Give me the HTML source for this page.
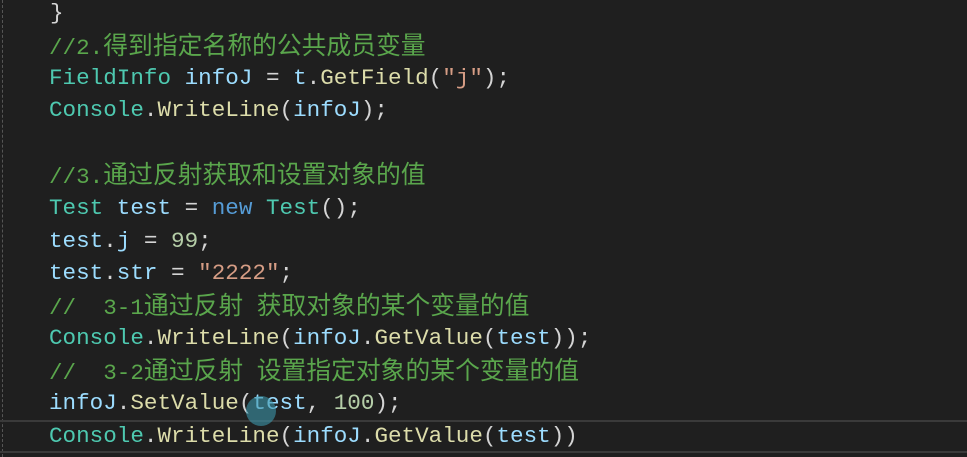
<!DOCTYPE html>
<html><head><meta charset="utf-8"><style>
html,body{margin:0;padding:0;width:967px;height:457px;overflow:hidden;background:#1f1f1f;}
.l{position:absolute;left:49px;font-family:"Liberation Mono","Noto Sans CJK SC",monospace;font-size:22.6px;line-height:32px;height:32px;white-space:pre;color:#d4d4d4;}
.c{color:#5aa64c;}
.z{font-size:24.8px;line-height:10px;font-family:"Noto Sans CJK SC",sans-serif;}
.t{color:#4ec9b0}.v{color:#9cdcfe}.m{color:#dcdcaa}.k{color:#569cd6}.s{color:#d69d85}.n{color:#b5cea8}
.guide{position:absolute;left:2px;top:0;height:457px;border-left:1px dashed #555;}
.cur{position:absolute;left:0;top:420px;width:967px;height:29px;border-top:2px solid #3a3a3a;border-bottom:2px solid #3a3a3a;}
</style></head><body>
<div class="guide"></div>
<div class="cur"></div>
<div class="l" style="top:-3px;left:50px">}</div>
<div class="l c" style="top:32px">//2.<span class="z">得到指定名称的公共成员变量</span></div>
<div class="l" style="top:62px"><span class="t">FieldInfo</span> <span class="v">infoJ</span> = <span class="v">t</span>.<span class="m">GetField</span>(<span class="s">"j"</span>);</div>
<div class="l" style="top:94px"><span class="t">Console</span>.<span class="m">WriteLine</span>(<span class="v">infoJ</span>);</div>
<div class="l c" style="top:161px">//3.<span class="z">通过反射获取和设置对象的值</span></div>
<div class="l" style="top:192px"><span class="t">Test</span> <span class="v">test</span> = <span class="k">new</span> <span class="t">Test</span>();</div>
<div class="l" style="top:225px"><span class="v">test</span>.<span class="v">j</span> = <span class="n">99</span>;</div>
<div class="l" style="top:257px"><span class="v">test</span>.<span class="v">str</span> = <span class="s">"2222"</span>;</div>
<div class="l c" style="top:292px">//  3-1<span class="z">通过反射</span> <span class="z">获取对象的某个变量的值</span></div>
<div class="l" style="top:322px"><span class="t">Console</span>.<span class="m">WriteLine</span>(<span class="v">infoJ</span>.<span class="m">GetValue</span>(<span class="v">test</span>));</div>
<div class="l c" style="top:357px">//  3-2<span class="z">通过反射</span> <span class="z">设置指定对象的某个变量的值</span></div>
<div class="l" style="top:387px"><span class="v">infoJ</span>.<span class="m">SetValue</span>(<span class="v">test</span>, <span class="n">100</span>);</div>
<div style="position:absolute;left:246px;top:396px;width:30px;height:30px;border-radius:50%;background:rgba(60,150,170,0.6)"></div>
<div class="l" style="top:420px"><span class="t">Console</span>.<span class="m">WriteLine</span>(<span class="v">infoJ</span>.<span class="m">GetValue</span>(<span class="v">test</span>))</div>
</body></html>
